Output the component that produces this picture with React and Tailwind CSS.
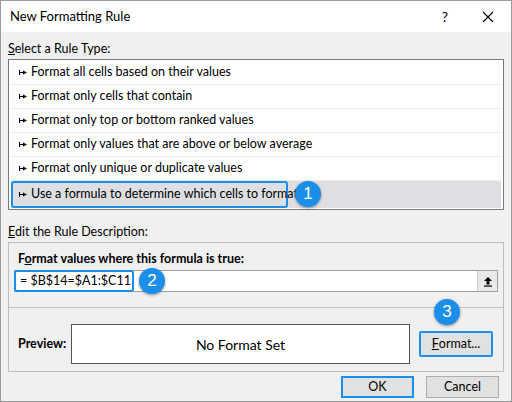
export default function App() {
  const items = [
    "Format all cells based on their values",
    "Format only cells that contain",
    "Format only top or bottom ranked values",
    "Format only values that are above or below average",
    "Format only unique or duplicate values",
  ];
  const Arrow = () => (
    <svg width="8" height="7" viewBox="0 0 8 7" className="mr-[4px] shrink-0"><rect x="0" y="1" width="1" height="5" fill="#000" /><rect x="0" y="3" width="5" height="1" fill="#000" /><path d="M4 1.5L8 3.5L4 5.5Z" fill="#000" /></svg>
  );
  const Badge = ({ n }) => (
    <div className="absolute w-[26px] h-[26px] rounded-full bg-[#1a8ee8] text-white text-[17px] flex items-center justify-center shadow-[0_1px_3px_rgba(0,0,0,0.4)]" style={{ fontFamily: "'Liberation Sans', sans-serif" }}>{n}</div>
  );
  return (
    <div className="w-[512px] h-[402px] bg-[#f0f0f0] border border-[#9a9a9a] flex flex-col text-[12.5px] text-black whitespace-nowrap" style={{ fontFamily: "Lato, sans-serif" }}>
      <div className="h-[31px] bg-white flex items-center pl-[9px] shrink-0">
        <span className="text-[13px] flex-1">New Formatting Rule</span>
        <span className="w-[20px] text-center text-[14px] mr-[27px]">?</span>
        <svg width="12" height="12" viewBox="0 0 12 12" className="mr-[17px]"><path d="M1 1L11 11M11 1L1 11" stroke="#000" strokeWidth="1.1" /></svg>
      </div>
      <div className="px-[7px] pt-[8px] flex flex-col">
        <div className="h-[18px] leading-[18px]"><u>S</u>elect a Rule Type:</div>
        <div className="border border-[#7a7a7a] bg-white mt-[1px] p-[1px] relative">
          {items.map((t) => (
            <div key={t} className="h-[24px] flex items-center pl-[8px] border-b border-[#ececec] mx-[1px]">
              <Arrow />{t}
            </div>
          ))}
          <div className="h-[27px] bg-[#dedee3] flex items-center mx-[1px] relative">
            <div className="h-[27px] w-[277px] border-2 border-[#1a8ee8] rounded-[3px] flex items-center pl-[6px]">
              <Arrow />Use a formula to determine which cells to format
            </div>
            <div className="absolute left-[284px] top-[0px]"><Badge n="1" /></div>
          </div>
        </div>
        <div className="h-[18px] leading-[18px] mt-[13px]"><u>E</u>dit the Rule Description:</div>
        <div className="border border-[#bdbdbd] mt-[1px] h-[130px] flex flex-col relative">
          <div className="font-bold pl-[9px] pt-[7px] h-[27px]">F<u>o</u>rmat values where this formula is true:</div>
          <div className="mx-[5px] h-[22px] bg-white border border-[#a0a0a0] flex items-center relative">
            <div className="h-[22px] w-[120px] border-2 border-[#1a8ee8] rounded-[3px] flex items-center pl-[4px] -ml-[1px]">= $B$14=$A1:$C11</div>
            <div className="absolute left-[124px] top-[-3px]"><Badge n="2" /></div>
            <div className="ml-auto w-[20px] h-[20px] bg-[#e9e9e9] border-l border-[#c9c9c9] flex items-center justify-center">
              <svg width="10" height="11" viewBox="0 0 10 11"><path d="M5 1L1 5H3.5V8.5H6.5V5H9Z" fill="#000" /><rect x="1" y="9.5" width="8" height="1.2" fill="#000" /></svg>
            </div>
          </div>
          <div className="h-[1px] bg-[#c4c4c4] mt-[15px]" />
          <div className="flex items-center mt-[16px]">
            <div className="font-bold pl-[9px] w-[62px]">Preview:</div>
            <div className="w-[339px] h-[40px] bg-white border border-[#555] flex items-center justify-center text-[14px]">No Format Set</div>
            <div className="ml-[9px] w-[74px] h-[26px] bg-[#e1e1e1] border-2 border-[#1a8ee8] rounded-[2px] flex items-center justify-center relative"><u>F</u>ormat...</div>
          </div>
          <div className="absolute left-[425px] top-[56px]"><Badge n="3" /></div>
        </div>
        <div className="flex justify-end gap-[12px] mt-[4px] pr-[5px]">
          <div className="w-[73px] h-[22px] bg-[#e1e1e1] border-2 border-[#1a8ee8] flex items-center justify-center">OK</div>
          <div className="w-[73px] h-[22px] bg-[#e1e1e1] border border-[#adadad] flex items-center justify-center">Cancel</div>
        </div>
      </div>
    </div>
  );
}
